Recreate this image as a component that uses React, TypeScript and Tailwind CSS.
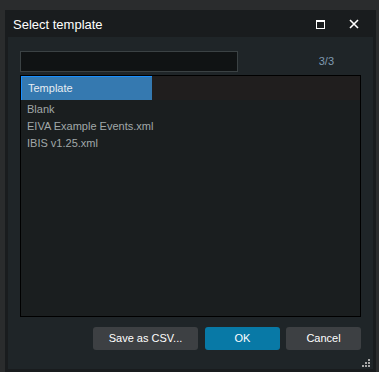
import React from "react";

const font = { fontFamily: '"Liberation Sans", Arial, sans-serif' };

export default function App() {
  const rows = ["Blank", "EIVA Example Events.xml", "IBIS v1.25.xml"];
  return (
    <div
      className="w-[379px] h-[372px] bg-[#2a2c2d] pl-[5px] pt-[10px] pr-[3px] overflow-hidden"
      style={font}
    >
      <div className="w-[371px] h-[362px] bg-[#191c1e] flex flex-col">
        {/* title bar */}
        <div className="h-[27px] flex items-center pl-[8px] pr-[17px] shrink-0">
          <span className="text-[13px] text-white leading-none mt-[1px]">Select template</span>
          <div className="ml-auto flex items-center gap-[24px]">
            <div className="w-[9px] h-[9px] border border-white border-t-2 mt-[1px]" />
            <svg width="10" height="10" viewBox="0 0 10 10" className="mt-[1px]">
              <path d="M1 1 L9 9 M9 1 L1 9" stroke="#ffffff" strokeWidth="1.6" />
            </svg>
          </div>
        </div>
        {/* content */}
        <div className="relative ml-[3px] w-[365px] h-[332px] bg-[#1f2528] pt-[14px] px-[12px] flex flex-col">
          <div className="flex items-center h-[21px]">
            <div className="w-[218px] h-[21px] bg-[#101314] border border-[#3b4244]" />
            <span className="ml-auto mr-[27px] text-[11px] text-[#7f9bb2] leading-none">3/3</span>
          </div>
          <div className="mt-[3px] h-[242px] border border-black bg-[#1a1e1f] flex flex-col">
            <div className="h-[24px] bg-[#201e1e] flex shrink-0">
              <div className="w-[131px] h-[24px] bg-[#3579b0] border-t border-l border-[#1a8fff] flex items-center pl-[6px]">
                <span className="text-[11px] text-[#e6edf2] leading-none">Template</span>
              </div>
            </div>
            <div className="pt-[1px] flex flex-col">
              {rows.map((r) => (
                <div key={r} className="h-[17px] flex items-center pl-[6px]">
                  <span className="text-[11px] text-[#a1a8a9] leading-none">{r}</span>
                </div>
              ))}
            </div>
          </div>
          <div className="mt-[10px] flex justify-end">
            <button className="w-[105px] h-[23px] rounded-[3px] bg-[#3d4043] text-white text-[11px] leading-none">
              Save as CSV...
            </button>
            <button className="ml-[7px] w-[75px] h-[23px] rounded-[3px] bg-[#0879a6] text-white text-[11px] leading-none">
              OK
            </button>
            <button className="ml-[6px] w-[75px] h-[23px] rounded-[3px] bg-[#3d4043] text-white text-[11px] leading-none">
              Cancel
            </button>
          </div>
          <svg
            width="9"
            height="9"
            viewBox="0 0 9 9"
            className="absolute right-[2px] bottom-[1px]"
          >
            <rect x="6" y="0" width="2" height="2" fill="#a8a8a8" />
            <rect x="3" y="3" width="2" height="2" fill="#a8a8a8" />
            <rect x="6" y="3" width="2" height="2" fill="#a8a8a8" />
            <rect x="0" y="6" width="2" height="2" fill="#a8a8a8" />
            <rect x="3" y="6" width="2" height="2" fill="#a8a8a8" />
            <rect x="6" y="6" width="2" height="2" fill="#a8a8a8" />
          </svg>
        </div>
      </div>
    </div>
  );
}
